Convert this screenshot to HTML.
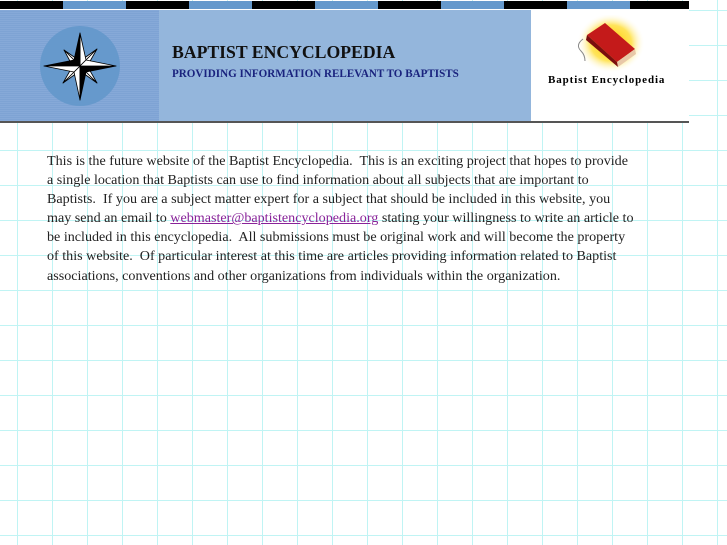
<!DOCTYPE html>
<html><head><style>
body{margin:0;width:727px;height:545px;overflow:hidden;background-color:#fff;
background-image:linear-gradient(to right,#c0f4f4 1px,transparent 1px),linear-gradient(to bottom,#c0f4f4 1px,transparent 1px);
background-size:35px 35px;background-position:17px 10px;position:relative;font-family:"Liberation Serif",serif}
.bar{position:absolute;top:1px;height:8px;width:63px}
.hdr{position:absolute;left:0;top:9px;width:689px;height:112px;background:#94b6dc;border-top:1px solid #fff}
.left{position:absolute;left:0;top:0;width:159px;height:112px;background:repeating-linear-gradient(#86a9d8 0 1px,#7ea3d4 1px 2px)}
.right{position:absolute;left:531px;top:0;width:158px;height:112px;background:#fff}
.line{position:absolute;left:0;top:121px;width:689px;height:2px;background:#555}
.t1{position:absolute;left:172px;top:32px;font-size:17.7px;font-weight:bold;color:#111;white-space:nowrap}
.t2{position:absolute;left:172px;top:58px;font-size:11.1px;font-weight:bold;color:#1a237e;white-space:nowrap}
.cap{position:absolute;left:548px;top:64px;font-size:11px;font-weight:bold;white-space:nowrap;letter-spacing:0.9px}
.txt{position:absolute;left:47px;top:152px;font-size:14.1px;line-height:19.1px;color:#222;white-space:pre}
a{color:#882299}
</style></head><body>
<div class="bar" style="left:0;background:#000"></div>
<div class="bar" style="left:63px;background:#6699cc"></div>
<div class="bar" style="left:126px;background:#000"></div>
<div class="bar" style="left:189px;background:#6699cc"></div>
<div class="bar" style="left:252px;background:#000"></div>
<div class="bar" style="left:315px;background:#6699cc"></div>
<div class="bar" style="left:378px;background:#000"></div>
<div class="bar" style="left:441px;background:#6699cc"></div>
<div class="bar" style="left:504px;background:#000"></div>
<div class="bar" style="left:567px;background:#6699cc"></div>
<div class="bar" style="left:630px;background:#000;width:59px"></div>
<div class="hdr">
<div class="left"></div>
<svg style="position:absolute;left:0;top:-9px" width="160" height="130">
<circle cx="80" cy="65" r="40" fill="#6699cc"/>
<g stroke="#000" stroke-width="0.8" stroke-linejoin="round">
<polygon points="80,65 64,49 77,58" fill="#fff"/><polygon points="80,65 64,49 71,62" fill="#fff"/>
<polygon points="80,65 97,48 83,58" fill="#fff"/><polygon points="80,65 97,48 89,62" fill="#fff"/>
<polygon points="80,65 97,82 89,68" fill="#fff"/><polygon points="80,65 97,82 83,72" fill="#fff"/>
<polygon points="80,65 63,82 77,72" fill="#fff"/><polygon points="80,65 63,82 71,68" fill="#fff"/>
<polygon points="80,32 86,59 80,65" fill="#fff"/><polygon points="80,32 74,59 80,65" fill="#000"/>
<polygon points="116,65 86,71 80,65" fill="#000"/><polygon points="116,65 86,59 80,65" fill="#fff"/>
<polygon points="80,99 74,71 80,65" fill="#fff"/><polygon points="80,99 86,71 80,65" fill="#000"/>
<polygon points="44,65 74,59 80,65" fill="#000"/><polygon points="44,65 74,71 80,65" fill="#fff"/>
</g></svg>
<div class="right">
<svg style="position:absolute;left:38px;top:5px" width="80" height="60">
<defs><radialGradient id="g"><stop offset="0" stop-color="#ffc800"/><stop offset=".6" stop-color="#ffe45a"/><stop offset="1" stop-color="#fff" stop-opacity="0"/></radialGradient></defs>
<ellipse cx="42" cy="28" rx="34" ry="30" fill="url(#g)"/>
<path d="M14 24 q-8 6 -2 12 q4 4 4 10" stroke="#888" fill="none"/>
<polygon points="18,20 36,8 66,34 48,47" fill="#c41a1a"/>
<polygon points="48,47 66,34 67,39 49,52" fill="#e8c8a8"/>
<polygon points="18,20 48,47 49,52 17,25" fill="#7a0e0e"/>
</svg>
</div>
<div class="t1">BAPTIST ENCYCLOPEDIA</div>
<div class="t2">PROVIDING INFORMATION RELEVANT TO BAPTISTS</div>
<div class="cap">Baptist Encyclopedia</div>
</div>
<div class="line"></div>
<div class="txt">This is the future website of the Baptist Encyclopedia.  This is an exciting project that hopes to provide
a single location that Baptists can use to find information about all subjects that are important to
Baptists.  If you are a subject matter expert for a subject that should be included in this website, you
may send an email to <a href="#">webmaster@baptistencyclopedia.org</a> stating your willingness to write an article to
be included in this encyclopedia.  All submissions must be original work and will become the property
of this website.  Of particular interest at this time are articles providing information related to Baptist
associations, conventions and other organizations from individuals within the organization.</div>
</body></html>
